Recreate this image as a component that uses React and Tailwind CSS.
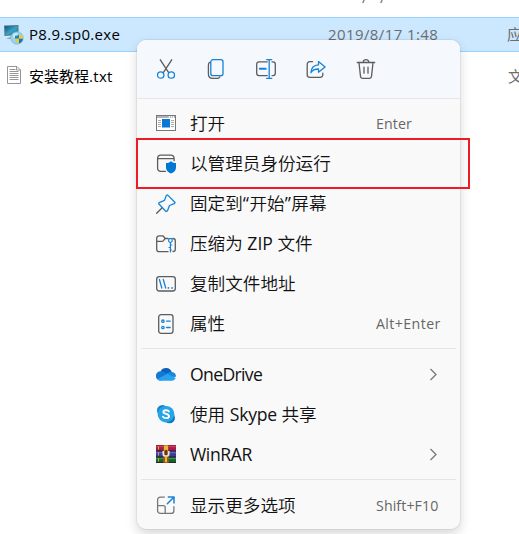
import React from 'react';

const G = '#5c5c5c';
const B = '#1683d8';

function Svg({ children, size = 20, className = '' }) {
  return (
    <svg className={'block shrink-0 ' + className} width={size} height={size} viewBox="0 0 20 20" fill="none" stroke={G} strokeWidth="1.3" strokeLinecap="round" strokeLinejoin="round">
      {children}
    </svg>
  );
}

const Cut = () => (
  <Svg>
    <path d="M4.3 .8 12.5 13.3M15.7 .8 7.5 13.3" />
    <g stroke={B}><circle cx="4.7" cy="16" r="3.2" /><circle cx="15.3" cy="16" r="3.2" /></g>
  </Svg>
);
const Copy = () => (
  <Svg>
    <path d="M4.2 3.2C2.8 3.7 2.4 4.7 2.4 6v9c0 3 1.5 4.4 4.4 4.4h4.5c1.3 0 2.2-.6 2.6-1.6" />
    <rect x="4.8" y=".7" width="12.2" height="16" rx="2.2" stroke={B} />
  </Svg>
);
const Rename = () => (
  <Svg>
    <path d="M11.2 2.8H3A2.3 2.3 0 0 0 .7 5.1v9.2A2.3 2.3 0 0 0 3 16.6h8.2M16 2.8h1a2.3 2.3 0 0 1 2.3 2.3v9.2a2.3 2.3 0 0 1-2.3 2.3h-1" />
    <path d="M10.7.6h5M13.2.6v18.8M10.7 19.4h5" stroke={B} />
    <path d="M3.8 9.8h6" stroke={B} strokeWidth="1.9" />
  </Svg>
);
const Share = () => (
  <Svg>
    <path d="M6.5 2.7H3.7a2.5 2.5 0 0 0-2.5 2.5v10.6a2.5 2.5 0 0 0 2.500 2.500h10.600a2.500 2.500 0 0 0 2.500-2.500v-1.600" />
    <path d="M12.500 2.600 19.100 7.900l-6.600 5.300V10c-3.600 0-6 .9-7.500 3.600C5.200 9.100 8 6.100 12.500 5.800Z" stroke={B} />
  </Svg>
);
const Trash = () => (
  <Svg>
    <path d="M1.300 3.500h17.400M7.200 3.300c0-3.500 5.600-3.500 5.600 0M3 3.700l1.500 13.700c.1 1.200.8 1.900 1.900 1.900h7.200c1.100 0 1.800-.7 1.900-1.900L17 3.700M8 8.200v6M12 8.200v6" />
  </Svg>
);
const Open = () => (
  <Svg>
    <rect x=".5" y="1.500" width="19" height="15" strokeLinejoin="miter" fill="#fff" strokeWidth="1" stroke="#777" />
    <path d="M.8 3h18.400" strokeWidth="1.300" strokeDasharray="12 1 1 1 1 1" strokeLinecap="butt" stroke="#999" />
    <path d="M2 6.500h3M2 8.500h3M2 10.500h3M2 12.500h3M15 6.500h3M15 8.500h3M15 10.500h3M15 12.500h3" strokeWidth="1" strokeLinecap="butt" stroke="#aaa" />
    <rect x="6" y="5" width="8" height="8.500" fill="#0878d2" stroke="none" />
  </Svg>
);
const Admin = () => (
  <Svg>
    <path d="M9.500 17.300H4.600a3 3 0 0 1-3-3V4.200a3 3 0 0 1 3-3h10.500a3 3 0 0 1 3 3v2.500M1.800 4.700h16.100" />
    <path d="M15 7.200c1.500 1.300 3 1.800 5 1.900v4.300c0 3-2 5-5 6-3-1-5-3-5-6V9.100c2-.1 3.500-.6 5-1.900Z" fill="#0078d4" stroke="none" />
  </Svg>
);
const Pin = () => (
  <Svg>
    <path d="M.7 19.300 6.200 13.700" />
    <path d="M11.500.9 19.100 8.500 18.300 9.700 13.500 11.500 11.400 16.900 10 17.500 2.700 9.700 3.200 8.600 8.500 6.400 10.300 1.500Z" stroke={B} />
  </Svg>
);
const Zip = () => (
  <Svg>
    <path d="M12 17.700H3.200a2.500 2.500 0 0 1-2.500-2.500V4.300a2.500 2.500 0 0 1 2.500-2.500h3.600l2.500 2.700h2.500M.8 7.300h5.600c1.400 0 1.800-2.800 3-2.800M17 4.500a2.300 2.300 0 0 1 2.300 2.300v8.400a2.500 2.500 0 0 1-2.300 2.500" />
    <path d="M12.700 4.700h3.400v2.700l-1.700 1.500-1.700-1.500ZM14.400 9v9M14.600 11h1.200M14.200 13.500h-1.200M14.600 16h1.200" stroke={B} strokeWidth="1.200" />
  </Svg>
);
const Path = () => (
  <Svg>
    <rect x=".7" y="2.700" width="18.600" height="14.300" rx="2.500" />
    <path d="M3.400 5.500 5.800 14M7.300 5.500 9.700 14" stroke={B} />
    <path d="M12.400 13.900h.1M16 13.900h.1" stroke={B} strokeWidth="1.700" />
  </Svg>
);
const Props = () => (
  <Svg>
    <rect x="2.700" y=".7" width="14.300" height="18.600" rx="2.300" />
    <g stroke={B}><circle cx="6.900" cy="7.200" r="1.200" /><circle cx="6.900" cy="13.500" r="1.200" /><path d="M10.500 7.200h3.700M10.500 13.500h3.700" /></g>
  </Svg>
);
const Drive = () => (
  <Svg>
    <g stroke="none" transform="translate(0 -.8)">
      <path d="M4.600 7.200A6.100 6.100 0 0 1 15.800 8L10 12Z" fill="#0b62b8" />
      <path d="M4.700 7.100c2 0 3 .5 4.600 1.500L13 11l-8.500 5.500A4.700 4.700 0 1 1 4.700 7.100Z" fill="#1477d1" />
      <path d="M10.500 9.500c2-1.800 3.300-2 5.500-1.700a4.100 4.100 0 0 1 3.900 4.700L16 13Z" fill="#1688df" />
      <path d="m1.500 14.800 9.700-5.200 8.500 4.300c-.6 1.500-1.800 2.600-3.800 2.600H4.700c-1.500 0-2.500-.6-3.200-1.700Z" fill="#28a2ed" />
    </g>
  </Svg>
);
const Skype = () => (
  <Svg>
    <g transform="translate(0 -.8)">
      <g stroke="none">
        <circle cx="6.500" cy="6.300" r="5.500" fill="#1683c9" /><circle cx="13.500" cy="13.600" r="5.500" fill="#1375bd" />
        <circle cx="10" cy="10" r="8.300" fill="#25a5e9" />
      </g>
      <path d="M12.900 7.200c-.8-1.600-5.500-1.700-5.500.5 0 2.500 5.600 1.500 5.600 4.300 0 2.500-5.100 2.500-6.100.5" stroke="#fff" strokeWidth="1.900" />
    </g>
  </Svg>
);
const Rar = () => (
  <Svg>
    <g transform="translate(0 -1)">
      <g stroke="none">
        <path fill="#a51d46" d="M0 1h20v6H0z" /><path fill="#db4267" d="M0 2.200h20v1H0z" />
        <path fill="#3d3b98" d="M0 7h20v6H0z" /><path fill="#6870d0" d="M0 8.200h20v1H0z" />
        <path fill="#18602b" d="M0 13h20v6H0z" /><path fill="#42a052" d="M0 14.200h20v1H0z" />
        <path fill="#281925" d="M0 6.500h20v.8H0zM0 12.500h20v.8H0zM0 18.300h20v.7H0z" />
        <path fill="#e3aa21" d="M2 2.500h1v3H2zM2 8.500h1v3H2zM2 14.500h1v3H2z" />
        <path fill="#9b591d" d="M7.300 1h5.400v18H7.300z" /><path fill="#f1b632" d="M8 1.500h4v5H8zM9 13h2v5H9z" />
      </g>
      <path d="M7.300 7v3.500c0 2 5.400 2 5.400 0V7" stroke="#eee4d4" strokeWidth="1.700" strokeLinecap="butt" />
      <path d="M10 6.500v4" stroke="#3d241c" />
    </g>
  </Svg>
);
const More = () => (
  <Svg>
    <g transform="translate(0 -.7)">
      <path d="M8.400 1.800H4.300a2.700 2.700 0 0 0-2.700 2.700v10.900a2.700 2.700 0 0 0 2.700 2.700h10.900a2.700 2.700 0 0 0 2.700-2.700v-4M1.800 10.400h5.400a2 2 0 0 1 2 2V18" stroke="#777" />
      <path d="M12.300 1.800H18v5.800M17.800 2 11.300 8.500" stroke={B} strokeWidth="1.500" />
    </g>
  </Svg>
);

const ExeIcon = () => (
  <svg className="block shrink-0" width="20" height="20" viewBox="0 0 20 20">
    <defs><linearGradient id="screen" x1="0" y1="0" x2="1" y2="1"><stop stopColor="#075780" /><stop offset=".55" stopColor="#3ca4c4" /><stop offset="1" stopColor="#126482" /></linearGradient></defs>
    <g transform="translate(0 -1)">
      <path d="M0 1.500 14.500 1v10L.500 12Z" fill="#577885" /><path d="M1 2.300 13.500 2v8L1.300 10.900Z" fill="url(#screen)" />
      <path d="M2 15 8 12v3Z" fill="#91a8b3" />
      <circle cx="13" cy="14" r="6.200" fill="#9bd1eb" stroke="#74b9dc" strokeWidth=".8" /><circle cx="11.500" cy="11.500" r="2.500" fill="#c8e9f5" />
      <path d="M15 10.300v4.500h-4v-3c1.700 0 3-.5 4-1.500Z" fill="#1788cb" /><path d="M15 10.300c1.100 1 2.400 1.500 4 1.500v3h-4Z" fill="#f1c832" />
      <path d="M11 14.800h4v4.700c-2.300-1-3.700-2.500-4-4.700Z" fill="#f1c832" /><path d="M15 14.800h4c-.3 2.300-1.700 3.800-4 4.700Z" fill="#1479b9" />
    </g>
  </svg>
);
const TxtIcon = () => (
  <svg className="block shrink-0" width="16" height="20" viewBox="0 0 16 20" fill="none" stroke="#969696">
    <path d="M1.500 .5h9.500l3.500 3.500v13.500h-13Z" fill="#fff" /><path d="M10.500 .5V4H14.500M3.500 3.500h6M3.500 5.500h9M3.500 7.500h9M3.500 9.500h9M3.500 11.500h9M3.500 13.500h9" />
  </svg>
);

const Chevron = () => (
  <svg className="mr-[22px] block" width="9" height="13" viewBox="0 0 9 13" fill="none" stroke="#757575" strokeWidth="1.200"><path d="m1.500 1 5.500 5.500L1.500 12" /></svg>
);

function Row({ icon, hint, arrow, children }) {
  return (
    <div className="flex h-10 items-center pl-[19px]">
      {icon}
      <span className="ml-[14px] whitespace-pre pb-0.5 text-[17.6px] font-[350] leading-[38px] text-[#111]">{children}</span>
      {hint && <span className="ml-auto w-[84px] text-[14.2px] leading-10 tracking-[0.1px] text-[#666]">{hint}</span>}
      {arrow && <div className="ml-auto pb-px"><Chevron /></div>}
    </div>
  );
}

export default function App() {
  return (
    <div className="relative h-[534px] w-[519px] overflow-hidden bg-white font-['Open_Sans','Noto_Sans_CJK_SC',sans-serif]">
      <div className="h-[17px] overflow-hidden">
        <div className="-mt-[13px] flex h-5 items-center pl-[362px] text-[15px] leading-5 text-[#6d6d6d]">
          <span className="w-[18px]">/</span>
          <span>/</span>
        </div>
      </div>
      <div>
        <div className="flex h-[35px] items-center border-y border-[#99d1ff] bg-[#cce8ff] pl-1 text-[15px]">
          <ExeIcon />
          <span className="ml-[5px] w-[299px] shrink-0 text-black"><span className="tracking-[0.3px]">P8.9.sp0.exe</span></span>
          <span className="w-[179px] shrink-0 text-[#6d6d6d]"><span className="tracking-[0.4px]">2019/8/17 1:48</span></span>
          <span className="shrink-0 text-[#6d6d6d]">应</span>
        </div>
        <div className="flex h-[48px] items-center pl-[6px] text-[15px]">
          <TxtIcon />
          <span className="ml-[7px] w-[479px] shrink-0 text-black">安装教程<span className="tracking-[0.3px]">.txt</span></span>
          <span className="shrink-0 text-[#6d6d6d]">文</span>
        </div>
      </div>

      <div className="absolute left-[137px] top-10 h-[489px] w-[323px] rounded-[9px] bg-[#f9f9f9] shadow-[0_0_0_1px_rgba(0,0,0,0.055),0_5px_12px_rgba(0,0,0,0.16)]">
        <div className="flex h-[59px] items-center gap-[30px] rounded-t-[9px] border-b border-[#e4e6e8] bg-[#f5f8fc] pl-[19px]">
          <Cut /><Copy /><Rename /><Share /><Trash />
        </div>
        <div className="pt-[5px]">
          <Row icon={<Open />} hint="Enter">打开</Row>
          <Row icon={<Admin />}>以管理员身份运行</Row>
          <Row icon={<Pin />}>固定到<span className="font-normal tracking-[0.5px]">“</span>开始<span className="font-normal tracking-[0.5px]">”</span>屏幕</Row>
          <Row icon={<Zip />}>压缩为 <span className="font-normal">ZIP</span> 文件</Row>
          <Row icon={<Path />}>复制文件地址</Row>
          <Row icon={<Props />} hint={<span className="tracking-[0.4px]">Alt+Enter</span>}>属性</Row>
        </div>
        <div className="mx-1 mb-[6px] mt-1 h-px bg-[#e5e5e5]" />
        <Row icon={<Drive />} arrow><span className="font-normal tracking-[-0.65px]">OneDrive</span></Row>
        <Row icon={<Skype />}>使用 <span className="font-normal tracking-[-0.25px]">Skype</span> 共享</Row>
        <Row icon={<Rar />} arrow><span className="font-normal tracking-[-0.4px]">WinRAR</span></Row>
        <div className="mx-1 mb-[6px] mt-1 h-px bg-[#e5e5e5]" />
        <Row icon={<More />} hint="Shift+F10">显示更多选项</Row>
      </div>

      <div className="absolute left-[136px] top-[138px] h-[51px] w-[334px] border-2 border-[#ed1c24]" />
    </div>
  );
}
